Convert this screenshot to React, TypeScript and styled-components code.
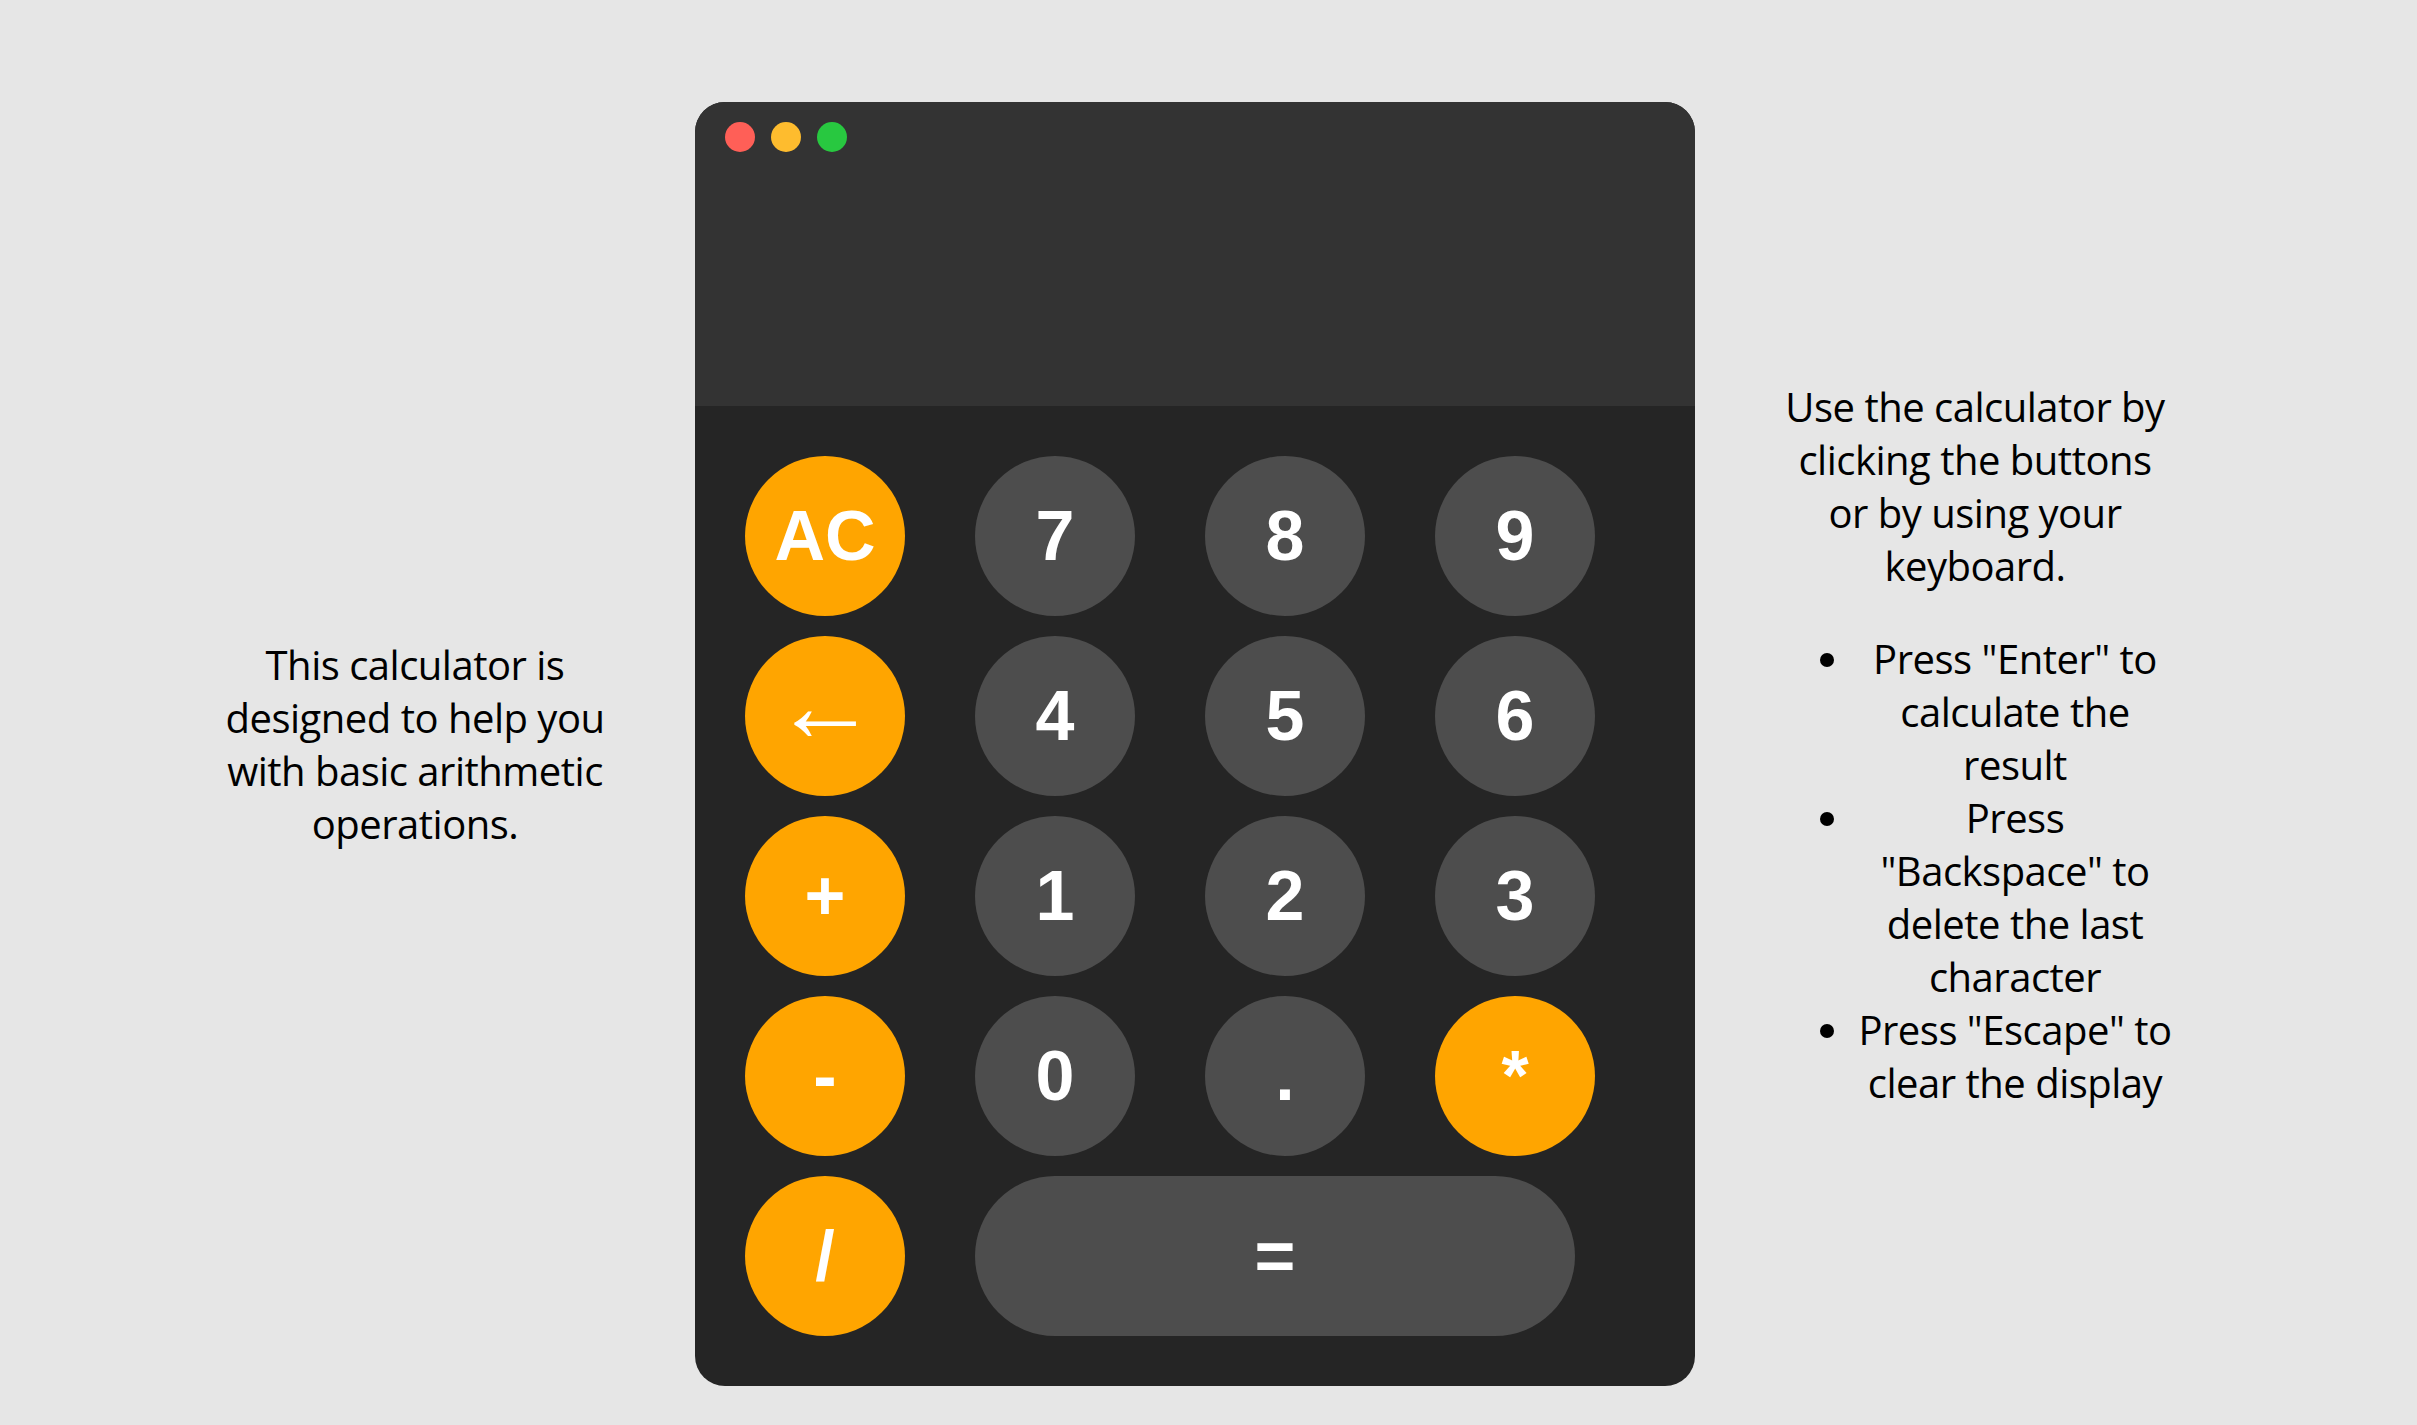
import React from "react";
import styled, { createGlobalStyle } from "styled-components";

const GlobalStyle = createGlobalStyle`
  body {
    margin: 0;
    background: #e6e6e6;
    font-family: "Open Sans", "Noto Sans", sans-serif;
    color: #000;
  }
`;

const keys: { label: string; op?: boolean; wide?: boolean; glyph?: boolean }[] = [
  { label: "AC", op: true },
  { label: "7" },
  { label: "8" },
  { label: "9" },
  { label: "←", op: true, glyph: true },
  { label: "4" },
  { label: "5" },
  { label: "6" },
  { label: "+", op: true },
  { label: "1" },
  { label: "2" },
  { label: "3" },
  { label: "-", op: true },
  { label: "0" },
  { label: "." },
  { label: "*", op: true },
  { label: "/", op: true },
  { label: "=", wide: true },
];

const App = () => {
  return (
    <>
      <GlobalStyle />
      <Page>
        <SideNote>
          This calculator is designed to help you with basic arithmetic
          operations.
        </SideNote>

        <Calculator>
          <Display>
            <Lights>
              <Light color="#ff5f57" />
              <Light color="#febc2e" />
              <Light color="#28c840" />
            </Lights>
          </Display>
          <Keypad>
            {keys.map((k) => (
              <Key key={k.label} $op={k.op} $wide={k.wide} $glyph={k.glyph}>
                {k.label}
              </Key>
            ))}
          </Keypad>
        </Calculator>

        <Help>
          <HelpIntro>
            Use the calculator by clicking the buttons or by using your
            keyboard.
          </HelpIntro>
          <HelpList>
            <li>Press "Enter" to calculate the result</li>
            <li>Press "Backspace" to delete the last character</li>
            <li>Press "Escape" to clear the display</li>
          </HelpList>
        </Help>
      </Page>
    </>
  );
};

const Page = styled.main`
  display: flex;
  align-items: center;
  gap: 80px;
  padding: 102px 0 39px 215px;
`;

const SideNote = styled.p`
  width: 400px;
  flex-shrink: 0;
  margin: 0;
  text-align: center;
  font-size: 40px;
  line-height: 53px;
  letter-spacing: -0.5px;
`;

const Calculator = styled.div`
  width: 1000px;
  flex-shrink: 0;
  border-radius: 30px;
  overflow: hidden;
  background: #252525;
`;

const Display = styled.div`
  height: 304px;
  box-sizing: border-box;
  padding: 20px 30px;
  background: #333333;
`;

const Lights = styled.div`
  display: flex;
  gap: 16px;
`;

const Light = styled.span<{ color: string }>`
  width: 30px;
  height: 30px;
  border-radius: 50%;
  background: ${({ color }) => color};
`;

const Keypad = styled.div`
  display: grid;
  grid-template-columns: repeat(4, 160px);
  grid-auto-rows: 160px;
  column-gap: 70px;
  row-gap: 20px;
  padding: 50px;
`;

const Key = styled.button<{ $op?: boolean; $wide?: boolean; $glyph?: boolean }>`
  display: flex;
  align-items: center;
  justify-content: center;
  box-sizing: border-box;
  width: ${({ $wide }) => ($wide ? "600px" : "160px")};
  height: 160px;
  grid-column: ${({ $wide }) => ($wide ? "span 3" : "auto")};
  padding: 0 0 ${({ $glyph }) => ($glyph ? "22px" : "0")};
  border: none;
  border-radius: 80px;
  background: ${({ $op }) => ($op ? "#ffa500" : "#4d4d4d")};
  color: #fff;
  font-family: "Liberation Sans", Arial, sans-serif;
  font-weight: ${({ $glyph }) => ($glyph ? "normal" : "bold")};
  font-size: ${({ $glyph }) => ($glyph ? "104px" : "70px")};
  line-height: 1;
  cursor: pointer;
`;

const Help = styled.div`
  width: 400px;
  flex-shrink: 0;
  text-align: center;
  font-size: 40px;
  line-height: 53px;
  letter-spacing: -0.5px;
`;

const HelpIntro = styled.p`
  margin: 40px 0;
`;

const HelpList = styled.ul`
  margin: 40px 0;
  padding-left: 80px;
`;

export default App;
